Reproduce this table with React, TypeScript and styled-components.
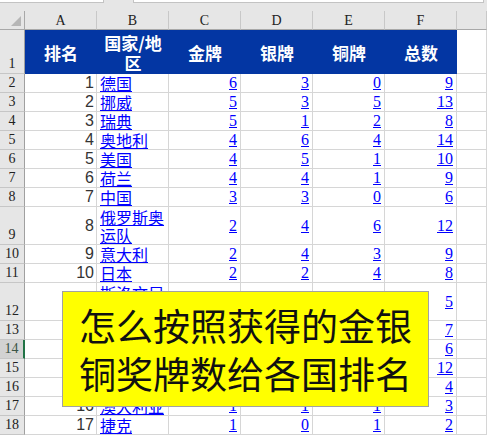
import React from "react";
import styled, { createGlobalStyle } from "styled-components";

const GlobalStyle = createGlobalStyle`
  html, body { margin: 0; padding: 0; background: #fff; }
  body { width: 487px; height: 436px; overflow: hidden; font-family: "Liberation Serif", serif; }
  * { box-sizing: border-box; }
`;

const Sheet = styled.div`
  position: relative;
  width: 487px;
  height: 436px;
  overflow: hidden;
  background: #fff;
`;

const TopBar = styled.div`
  height: 11px;
  background: #e6e6e6;
  display: flex;
  align-items: flex-start;
`;

const NameBox = styled.div`
  width: 104px;
  height: 3px;
  background: #fff;
  border-bottom: 1px solid #c3c3c3;
  border-right: 1px solid #c3c3c3;
`;

const FormulaBox = styled.div`
  margin-left: 29px;
  width: 351px;
  height: 3px;
  background: #fff;
  border-bottom: 1px solid #c3c3c3;
  border-left: 1px solid #c3c3c3;
  border-right: 1px solid #c3c3c3;
`;

const Row = styled.div<{ $h: number }>`
  display: grid;
  grid-template-columns: 25px repeat(6, 72px) 1fr;
  height: ${(p) => p.$h}px;
`;

const Corner = styled.div`
  position: relative;
  background: #e6e6e6;
  border-right: 1px solid #a8a8a8;
  border-bottom: 1px solid #a8a8a8;
  &::after {
    content: "";
    position: absolute;
    right: 3px;
    bottom: 3px;
    width: 10px;
    height: 10px;
    background: #b6b6b6;
    clip-path: polygon(100% 0, 100% 100%, 0 100%);
  }
`;

const ColHead = styled.div`
  background: #e6e6e6;
  border-right: 1px solid #c8c8c8;
  border-bottom: 1px solid #a8a8a8;
  display: flex;
  align-items: center;
  justify-content: center;
  font-family: "Liberation Serif", serif;
  font-size: 14px;
  color: #222;
  padding-top: 2px;
`;

const RowHead = styled.div<{ $active?: boolean }>`
  background: ${(p) => (p.$active ? "#d2d2d2" : "#e6e6e6")};
  border-right: ${(p) => (p.$active ? "2px solid #217346" : "1px solid #a0a0a0")};
  border-bottom: 1px solid #c6c6c6;
  display: flex;
  align-items: flex-end;
  justify-content: center;
  font-family: "Liberation Serif", serif;
  font-size: 14px;
  line-height: 16px;
  color: ${(p) => (p.$active ? "#3b5446" : "#222")};
  padding-bottom: 1px;
`;

const TitleCell = styled.div`
  background: #0336a3;
  color: #fff;
  display: flex;
  align-items: center;
  justify-content: center;
  text-align: center;
  font-family: "Noto Sans CJK SC", sans-serif;
  font-weight: 700;
  font-size: 17px;
  line-height: 20px;
  padding-top: 1px;
`;

const Cell = styled.div<{ $align?: "left" | "right" }>`
  border-right: 1px solid #d6d6d6;
  border-bottom: 1px solid #d6d6d6;
  display: flex;
  align-items: center;
  justify-content: ${(p) => (p.$align === "left" ? "flex-start" : "flex-end")};
  padding: ${(p) => (p.$align === "left" ? "0 2px 0 3px" : "0 3px 0 2px")};
`;

const Rank = styled.span`
  font-family: "Liberation Sans", sans-serif;
  font-size: 16px;
  line-height: 18px;
  color: #333;
  margin-right: -1px;
`;

const Country = styled.span`
  font-family: "Noto Sans CJK SC", sans-serif;
  font-size: 16px;
  line-height: 18px;
  color: #0000ff;
  text-decoration: underline;
  text-underline-offset: 1px;
`;

const Num = styled.span`
  font-family: "Liberation Serif", serif;
  font-size: 16px;
  line-height: 18px;
  color: #0000ff;
  text-decoration: underline;
  text-underline-offset: 1px;
`;

const Note = styled.div`
  position: absolute;
  left: 62px;
  top: 291px;
  width: 367px;
  height: 116px;
  background: #ffff00;
  border: 1px solid #a2a2a2;
  display: flex;
  flex-direction: column;
  align-items: center;
  justify-content: center;
  font-family: "Noto Sans CJK SC", sans-serif;
  font-size: 37px;
  line-height: 48px;
  color: #111;
`;

type Rec = {
  n: number;
  h: number;
  r: string;
  c: string;
  g: number;
  s: number;
  b: number;
  t: number;
};

const data: Rec[] = [
  { n: 2, h: 19, r: "1", c: "德国", g: 6, s: 3, b: 0, t: 9 },
  { n: 3, h: 19, r: "2", c: "挪威", g: 5, s: 3, b: 5, t: 13 },
  { n: 4, h: 19, r: "3", c: "瑞典", g: 5, s: 1, b: 2, t: 8 },
  { n: 5, h: 19, r: "4", c: "奥地利", g: 4, s: 6, b: 4, t: 14 },
  { n: 6, h: 19, r: "5", c: "美国", g: 4, s: 5, b: 1, t: 10 },
  { n: 7, h: 19, r: "6", c: "荷兰", g: 4, s: 4, b: 1, t: 9 },
  { n: 8, h: 19, r: "7", c: "中国", g: 3, s: 3, b: 0, t: 6 },
  { n: 9, h: 38, r: "8", c: "俄罗斯奥运队", g: 2, s: 4, b: 6, t: 12 },
  { n: 10, h: 19, r: "9", c: "意大利", g: 2, s: 4, b: 3, t: 9 },
  { n: 11, h: 19, r: "10", c: "日本", g: 2, s: 2, b: 4, t: 8 },
  { n: 12, h: 38, r: "11", c: "斯洛文尼亚", g: 2, s: 2, b: 1, t: 5 },
  { n: 13, h: 19, r: "12", c: "法国", g: 2, s: 4, b: 1, t: 7 },
  { n: 14, h: 19, r: "13", c: "瑞士", g: 2, s: 2, b: 2, t: 6 },
  { n: 15, h: 19, r: "14", c: "加拿大", g: 2, s: 5, b: 5, t: 12 },
  { n: 16, h: 19, r: "15", c: "韩国", g: 2, s: 1, b: 1, t: 4 },
  { n: 17, h: 19, r: "16", c: "澳大利亚", g: 1, s: 1, b: 1, t: 3 },
  { n: 18, h: 19, r: "17", c: "捷克", g: 1, s: 0, b: 1, t: 2 },
];

const titles = ["排名", "国家/地\n区", "金牌", "银牌", "铜牌", "总数"];

export default function App() {
  return (
    <Sheet>
      <GlobalStyle />
      <TopBar>
        <NameBox />
        <FormulaBox />
      </TopBar>
      <Row $h={19}>
        <Corner />
        {["A", "B", "C", "D", "E", "F"].map((l) => (
          <ColHead key={l}>{l}</ColHead>
        ))}
        <ColHead />
      </Row>
      <Row $h={44}>
        <RowHead>1</RowHead>
        {titles.map((t) => (
          <TitleCell key={t}>
            {t.split("\n").map((line, i) => (
              <React.Fragment key={i}>
                {i > 0 && <br />}
                {line}
              </React.Fragment>
            ))}
          </TitleCell>
        ))}
        <Cell />
      </Row>
      {data.map((d) => (
        <Row key={d.n} $h={d.h}>
          <RowHead $active={d.n === 14}>{d.n}</RowHead>
          <Cell>
            <Rank>{d.r}</Rank>
          </Cell>
          <Cell $align="left">
            <Country>{d.c}</Country>
          </Cell>
          <Cell>
            <Num>{d.g}</Num>
          </Cell>
          <Cell>
            <Num>{d.s}</Num>
          </Cell>
          <Cell>
            <Num>{d.b}</Num>
          </Cell>
          <Cell>
            <Num>{d.t}</Num>
          </Cell>
          <Cell />
        </Row>
      ))}
      <Note>
        <div>怎么按照获得的金银</div>
        <div>铜奖牌数给各国排名</div>
      </Note>
    </Sheet>
  );
}
